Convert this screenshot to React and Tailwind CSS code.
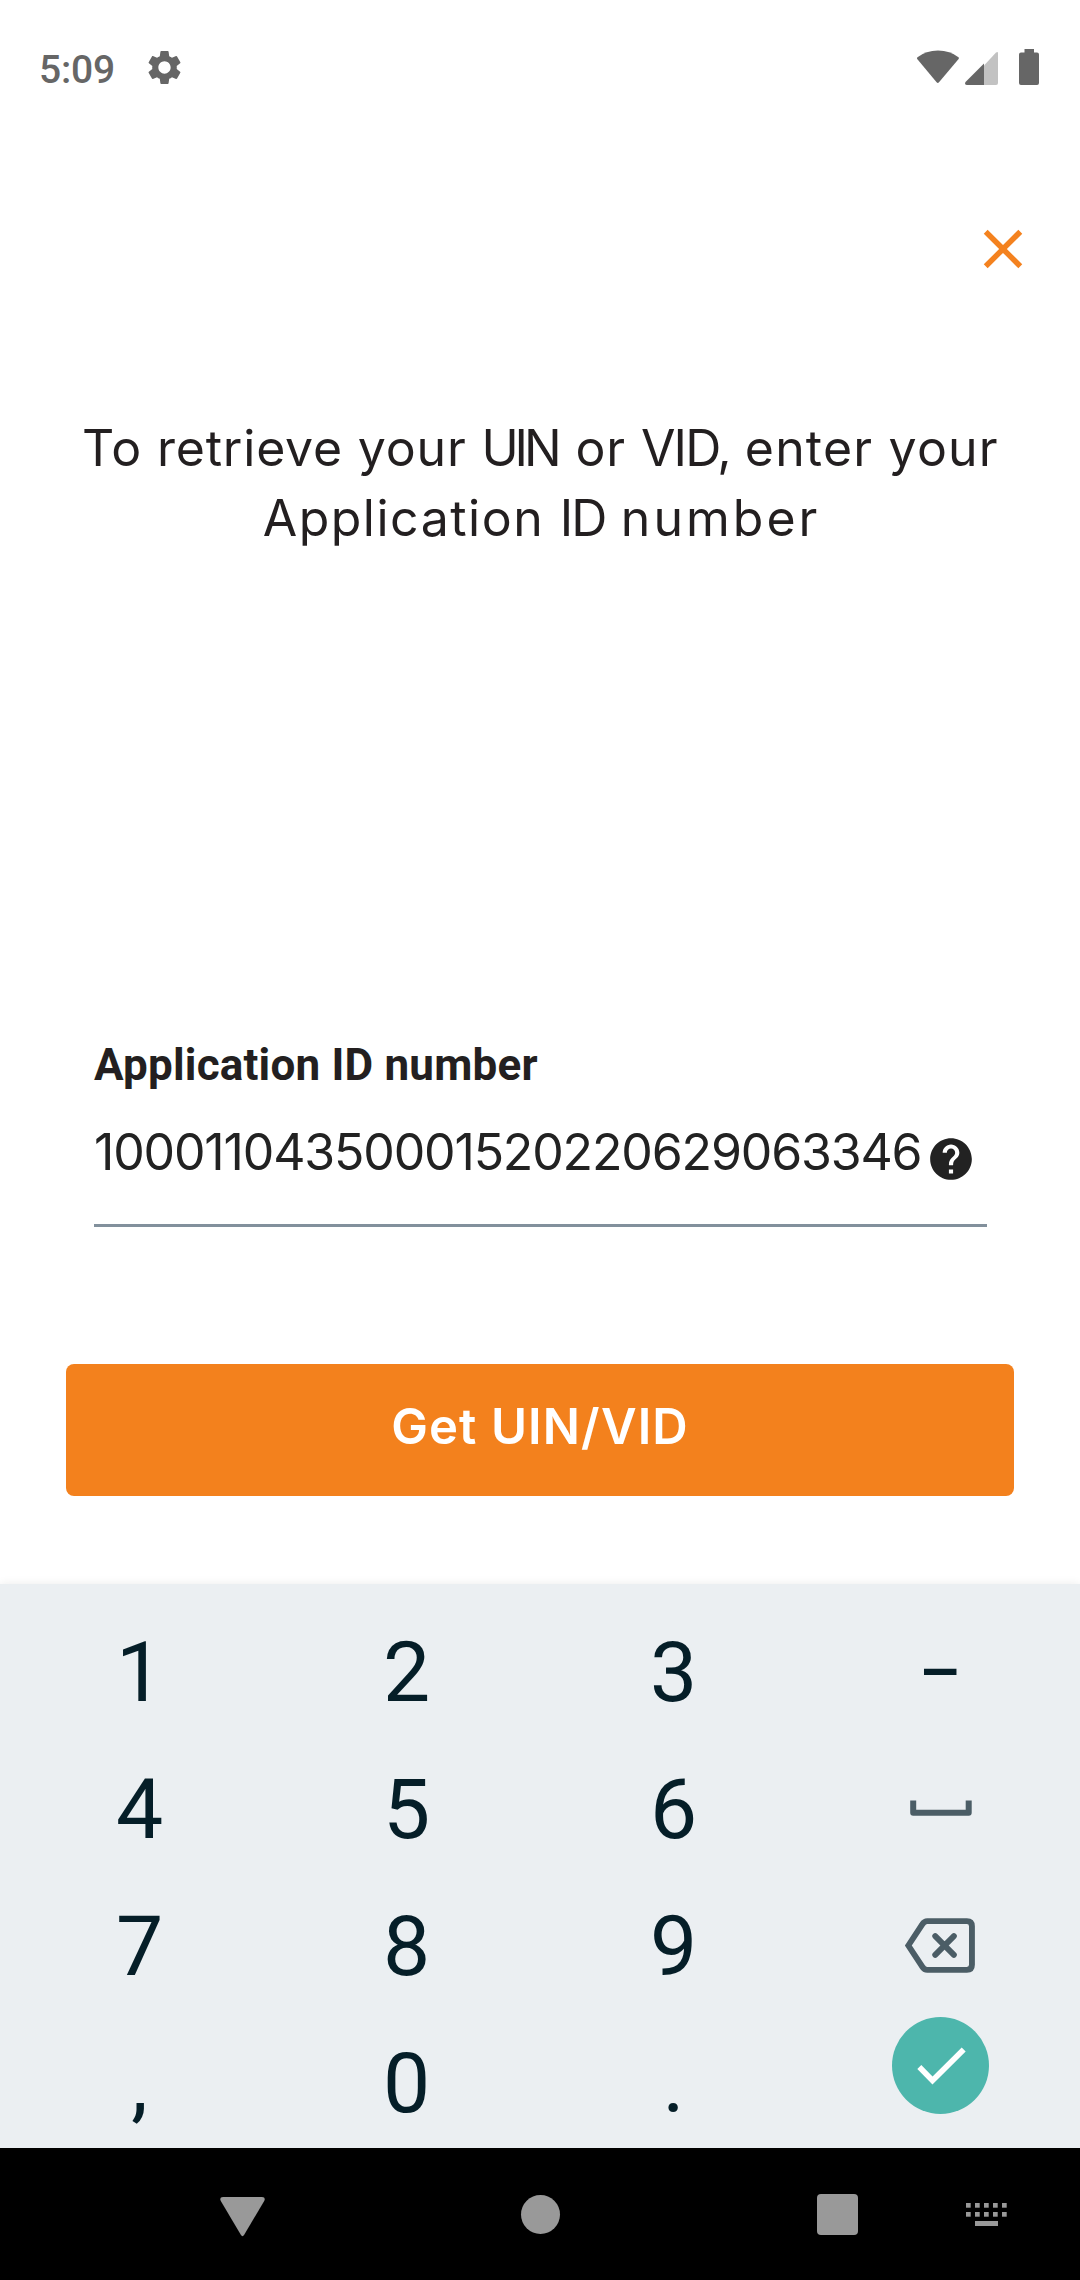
import { MdSettings, MdClose, MdHelp } from "react-icons/md";

function StatusBar() {
  return (
    <header className="flex h-[134px] items-center justify-between pl-[39px] pr-10 text-[#666666]">
      <div className="flex items-center gap-[29px]">
        <span className="mt-[6px] font-['Roboto',sans-serif] text-[39px] font-medium leading-none tracking-[-0.2px]">5:09</span>
        <MdSettings className="size-[41px]" />
      </div>
      <svg className="h-9 w-[124px]" viewBox="916 49 124 36">
        <path
          d="M917.5 57.2Q926 50.5 938 50.5T958.5 57.2Q959.3 58 958.6 59L939 82.3Q937.8 83.6 936.6 82.3L917.2 59Q916.5 58 917.5 57.2Z"
          fill="#666666"
        />
        <path d="M984 65.5L995.8 52.7Q998 51 998 53.5V83Q998 85 996 85H984Z" fill="#c2c2c2" />
        <path d="M984 63.5V85H967Q964 84.6 965.5 82Z" fill="#666666" />
        <path d="M1024.5 49H1034V52.5H1037Q1039 52.5 1039 54.5V83Q1039 85 1037 85H1021Q1019 85 1019 83V54.5Q1019 52.5 1021 52.5H1024.5Z" fill="#666666" />
      </svg>
    </header>
  );
}

function SpaceIcon() {
  return (
    <svg className="mt-[-4px] h-4 w-[62px]" viewBox="0 0 62 16" fill="none" stroke="#4b5d66" strokeWidth="6">
      <path d="M3.2 0.5V12.7H58.7V0.5" strokeLinejoin="round" />
    </svg>
  );
}

function BackspaceIcon() {
  return (
    <svg className="mr-px mt-[-2px] h-[55px] w-[71px]" viewBox="0 0 70 54" fill="none" stroke="#4b5d66">
      <path d="M3.3 27L17 6.2Q19 3 22 3H61Q66 3 66 8V46Q66 51 61 51H22Q19 51 17 47.8Z" strokeWidth="5.8" strokeLinejoin="miter" />
      <path d="M29.8 17.8L48.2 36.2M48.2 17.8L29.8 36.2" strokeWidth="5.8" strokeLinecap="round" />
    </svg>
  );
}

function EnterKey() {
  return (
    <span className="mt-[-36px] flex size-[97px] items-center justify-center rounded-full bg-[#4db6ac]">
      <svg className="size-24" viewBox="0 0 96 96" fill="none" stroke="#ffffff" strokeWidth="5.6">
        <path d="M26.3 49L39.5 62.5L70.7 31.5" />
      </svg>
    </span>
  );
}

function MinusKey() {
  return <span className="mt-[2px] inline-block scale-x-[0.79]">–</span>;
}

function Keyboard() {
  const keys = [
    "1", "2", "3", <MinusKey />,
    "4", "5", "6", <SpaceIcon />,
    "7", "8", "9", <BackspaceIcon />,
    ",", "0", ".", <EnterKey />,
  ];
  return (
    <section className="grid h-[564px] grid-cols-4 grid-rows-[repeat(4,137px)] bg-[#ebeff2] px-[6px] pt-[20px] shadow-[0_0_9px_rgba(0,0,0,0.08)]">
      {keys.map((key, i) => (
        <button
          key={i}
          className="flex h-[137px] items-center justify-center font-['Roboto',sans-serif] text-[84px] leading-[137px] text-[#051e28]"
        >
          {key}
        </button>
      ))}
    </section>
  );
}

function NavBar() {
  return (
    <nav className="flex h-[132px] items-center bg-black pl-[220px] text-[#999999]">
      <svg className="mt-[5px] h-10 w-[45px]" viewBox="0 0 45 40" fill="currentColor">
        <path d="M3 0H42Q46 0.3 44.2 4L24.2 37.8Q22.5 40.5 20.8 37.8L0.8 4Q-1 0.3 3 0Z" />
      </svg>
      <span className="ml-[256px] size-[39px] rounded-full bg-[#999999]" />
      <span className="ml-[257px] size-[41px] rounded bg-[#999999]" />
      <svg className="ml-[108px] h-[23px] w-[41px]" viewBox="0 0 41 23" fill="currentColor">
        {[0, 9, 18, 27, 36].map((x) => (
          <g key={x}>
            <rect x={x} y="0" width="4.7" height="4.7" />
            <rect x={x} y="9" width="4.7" height="4.7" />
          </g>
        ))}
        <rect x="9" y="18" width="23" height="5" />
      </svg>
    </nav>
  );
}

export default function App() {
  return (
    <div className="flex h-[2280px] w-[1080px] flex-col overflow-hidden bg-white font-['Inter',sans-serif] text-[#231f20]">
      <StatusBar />
      <main className="flex flex-1 flex-col">
        <button className="mr-[44px] mt-[82px] self-end text-[#f4821f]">
          <MdClose className="size-[66px]" />
        </button>
        <h1 className="mt-[131px] whitespace-nowrap text-center text-[50px] leading-[70px]">
          <span className="block pl-px tracking-[0.8px]">
            To retrieve your <span className="mr-[3px] tracking-[-4px]">UIN</span> or{" "}
            <span className="tracking-[-1.8px]">VID,</span> <span className="tracking-[1.2px]">enter your</span>
          </span>
          <span className="block pl-[3px] tracking-[1.5px]">
            Application <span className="tracking-[-2px]">ID</span>{" "}
            <span className="tracking-[3px]">number</span>
          </span>
        </h1>
        <div className="mx-[94px] mt-[485px] h-[189px] w-[893px] border-b-[3px] border-[#82909c]">
          <label className="block pt-px font-['Roboto',sans-serif] text-[44px] font-bold leading-[52px] tracking-[0.2px]">
            Application ID number
          </label>
          <div className="mt-[26px] flex items-center text-[#222222]">
            <span className="w-[832px] whitespace-nowrap text-[50px] leading-[70px] tracking-[-1.15px]">10001104350001520220629063346</span>
            <MdHelp className="mt-[14px] size-[50px] shrink-0" />
          </div>
        </div>
        <button className="mx-[66px] mt-[137px] h-[132px] rounded-lg bg-[#f3811d] pb-2 text-[49px] font-semibold leading-none tracking-[1.1px] text-white">
          Get UIN/VID
        </button>
      </main>
      <Keyboard />
      <NavBar />
    </div>
  );
}
